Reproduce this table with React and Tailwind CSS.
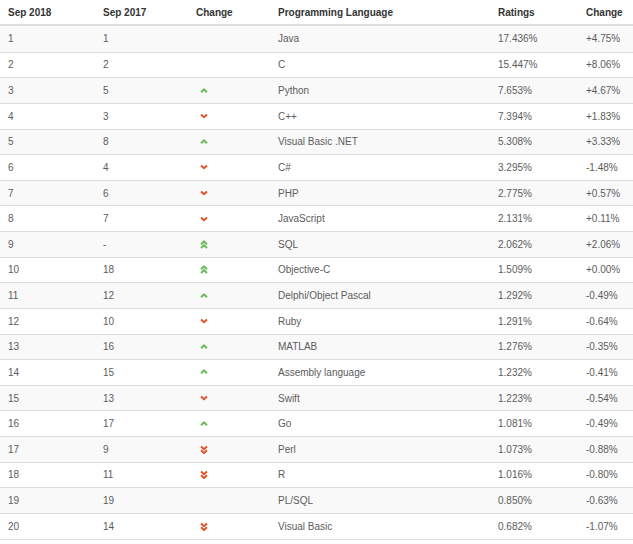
const ROWS = [
  [1, 1, null, "Java", "17.436%", "+4.75%"],
  [2, 2, null, "C", "15.447%", "+8.06%"],
  [3, 5, "up", "Python", "7.653%", "+4.67%"],
  [4, 3, "down", "C++", "7.394%", "+1.83%"],
  [5, 8, "up", "Visual Basic .NET", "5.308%", "+3.33%"],
  [6, 4, "down", "C#", "3.295%", "-1.48%"],
  [7, 6, "down", "PHP", "2.775%", "+0.57%"],
  [8, 7, "down", "JavaScript", "2.131%", "+0.11%"],
  [9, "-", "upup", "SQL", "2.062%", "+2.06%"],
  [10, 18, "upup", "Objective-C", "1.509%", "+0.00%"],
  [11, 12, "up", "Delphi/Object Pascal", "1.292%", "-0.49%"],
  [12, 10, "down", "Ruby", "1.291%", "-0.64%"],
  [13, 16, "up", "MATLAB", "1.276%", "-0.35%"],
  [14, 15, "up", "Assembly language", "1.232%", "-0.41%"],
  [15, 13, "down", "Swift", "1.223%", "-0.54%"],
  [16, 17, "up", "Go", "1.081%", "-0.49%"],
  [17, 9, "downdown", "Perl", "1.073%", "-0.88%"],
  [18, 11, "downdown", "R", "1.016%", "-0.80%"],
  [19, 19, null, "PL/SQL", "0.850%", "-0.63%"],
  [20, 14, "downdown", "Visual Basic", "0.682%", "-1.07%"],
];

const GRID = "grid grid-cols-[95px_93px_82px_220px_88px_55px] items-center";

// small chevrons used in the change column
const Arrow = ({ dir }) => {
  if (!dir) return null;
  const up = dir.startsWith("up");
  const dbl = dir === "upup" || dir === "downdown";
  const color = up ? "#6dbb5e" : "#e2532a";
  const first = up ? "M1 4.2 L4 1.4 L7 4.2" : "M1 1.4 L4 4.2 L7 1.4";
  const second = up ? "M1 8 L4 5.2 L7 8" : "M1 5.2 L4 8 L7 5.2";
  return (
    <svg width="8" height={dbl ? 9 : 6} viewBox={dbl ? "0 0 8 9" : "0 0 8 6"} className="ml-[4px]">
      <path d={first} fill="none" stroke={color} strokeWidth="2" />
      {dbl && <path d={second} fill="none" stroke={color} strokeWidth="2" />}
    </svg>
  );
};

export default function App() {
  return (
    <div className="w-[633px] h-[544px] bg-white text-[10px] text-[#5c5c5c] font-['Liberation_Sans',Arial,sans-serif] overflow-hidden">
      <div className={`${GRID} h-[26px] border-b-2 border-[#ddd] font-bold text-[#333]`}>
        <div className="pl-[8px]">Sep 2018</div>
        <div className="pl-[8px]">Sep 2017</div>
        <div className="pl-[8px]">Change</div>
        <div className="pl-[8px]">Programming Language</div>
        <div className="pl-[8px]">Ratings</div>
        <div className="pl-[8px]">Change</div>
      </div>
      {ROWS.map((r, i) => (
        <div
          key={r[0]}
          className={`${GRID} h-[25.63px] ${i > 0 ? "border-t border-[#ddd]" : ""} ${i % 2 === 0 ? "bg-[#f9f9f9]" : "bg-white"}`}
        >
          <div className="pl-[8px]">{r[0]}</div>
          <div className="pl-[8px]">{r[1]}</div>
          <div className="pl-[8px] flex items-center">
            <Arrow dir={r[2]} />
          </div>
          <div className="pl-[8px]">{r[3]}</div>
          <div className="pl-[8px]">{r[4]}</div>
          <div className="pl-[8px]">{r[5]}</div>
        </div>
      ))}
      <div className="border-t border-[#ddd]" />
    </div>
  );
}
